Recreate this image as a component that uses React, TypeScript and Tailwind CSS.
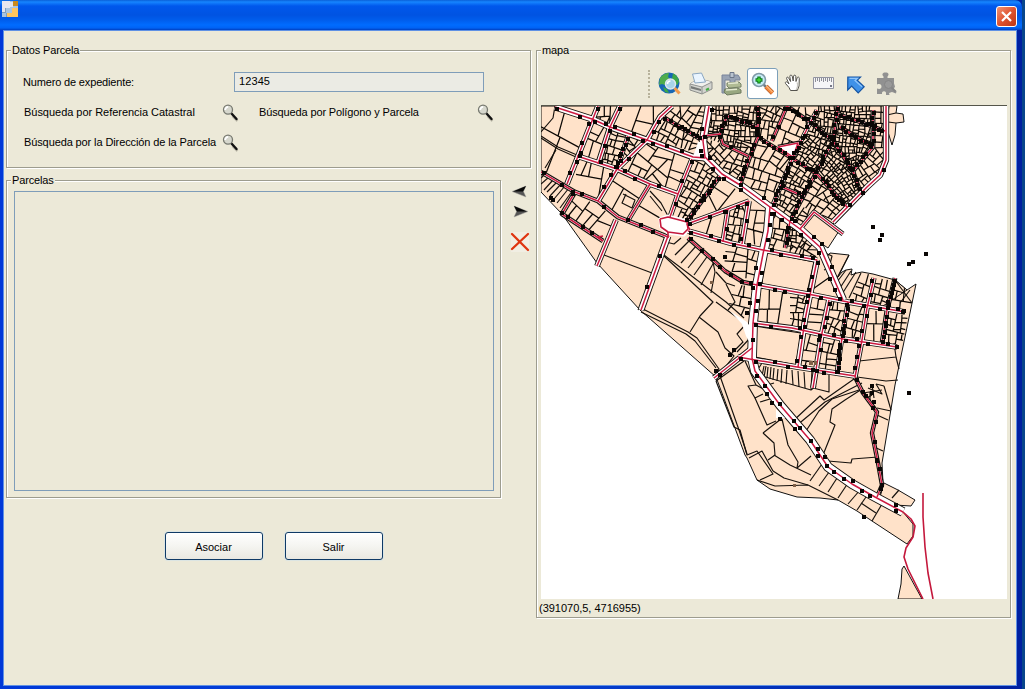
import React from "react";

type Pt = [number, number];

function parse(s: string): Pt[] {
  return s.split(" ").map((p) => p.split(",").map(Number) as Pt);
}

/* ---------- cadastral geometry ---------- */

const LAND = [
  "541,106 886,106 886,160 880,175 866,190 845,213 833,224 818,213 800,229 815,238 823,252 846,298 838,302 850,303 874,279 895,280 907,290 916,284 895,385 882,463 883,483 876,499 903,512 913,524 913,536 907,544 872,521 857,511 838,500 820,498 797,497 770,489 757,480 747,458 745,455 716,377 640,310 597,263 562,214 541,192",
  "889,106 897,106 896,113 903,114 904,122 896,123 895,135 892,145 888,132 886,130",
  "815,212 839,231 828,248 800,229",
  "830,253 849,255 838,277 842,272 846,270 852,269 851,275 857,273 862,272 873,274 895,280 907,290 880,308 845,302 823,262",
  "884,483 898,490 915,500 911,506 895,505 880,497",
  "904,566 922,599 898,599 901,584 902,569",
];

/* road, casing width, dot density (0 none, 1 sparse, 2 heavy) */
const ROADS: [string, number, number][] = [
  ["555,107 592,119 610,127 647,140 693,157 705,158", 5, 1],
  ["598,106 592,121 567,184", 4, 1],
  ["620,106 610,127 598,164", 4, 1],
  ["672,106 660,117 647,140 617,169 598,201", 4, 1],
  ["663,117 702,140", 2.5, 2],
  ["628,136 617,169", 3, 2],
  ["577,156 617,169 650,184 678,194", 4, 1],
  ["541,172 575,192 598,201 618,217 668,237", 2.5, 1],
  ["575,192 562,214 603,241", 2.5, 1],
  ["650,184 627,222", 3, 0],
  ["692,159 678,194 670,217", 3.5, 1],
  ["720,176 687,221", 2.5, 2],
  ["687,224 720,212 749,201", 3.5, 1],
  ["688,231 730,243 763,250 817,260", 4, 1],
  ["616,220 597,266", 4, 0],
  ["668,236 641,310", 5, 0],
  ["758,106 758,137 750,157 740,185", 2, 2],
  ["787,106 772,141", 2, 1],
  ["817,110 807,129 793,157 772,207", 3, 2],
  ["838,106 833,141 817,171 790,221 785,248", 2.2, 2],
  ["758,137 793,159 817,174 847,207", 2, 2],
  ["787,106 810,122 833,141 853,171 860,191", 2, 2],
  ["838,114 885,131", 2, 2],
  ["840,127 873,147", 2, 2],
  ["873,110 873,147 853,171", 2.5, 2],
  ["702,136 720,134 723,144 748,156", 2, 1],
  ["720,134 727,116 757,127", 2, 2],
  ["778,147 798,143 793,157 778,147", 2, 0],
  ["780,186 803,196", 2, 1],
  ["749,201 742,244", 4, 1],
  ["728,209 723,242", 3.5, 1],
  ["688,238 713,260 725,271 743,282 757,285", 2, 1],
  ["757,285 813,295 848,302 905,312", 4, 1],
  ["753,323 792,328 843,339 897,347", 4, 1],
  ["738,357 797,367 855,376", 4, 1],
  ["752,348 714,378", 4, 0],
  ["817,260 810,295 805,320 798,367", 4.5, 1],
  ["829,300 822,333 813,388", 4, 1],
  ["848,302 842,338 837,372", 3, 2],
  ["874,278 867,308 862,340 855,377", 3.5, 1],
  ["895,278 887,310 882,343", 2.5, 2],
  ["855,377 863,393 877,412 872,433 878,463 882,485 877,497", 2, 1],
  ["886,106 886,160 880,175 867,187 833,222", 4.5, 0],
  ["843,234 814,212 800,229", 3, 0],
];

/* trunk avenues, casing width, dot density */
const AVENUES: [string, number, number][] = [
  ["709,106 703,141 705,157 722,174 740,185 770,207 800,229 820,247 830,270 843,300", 6.5, 1],
  ["770,207 768,231 763,254 757,285 753,323 752,358 755,371 780,405 810,440 828,467 852,484 875,497 903,512", 8, 0],
];

/* polygons subdivided into lots: outline, target lot area */
const BLOCKS: [string, number][] = [
  ["595,106 620,106 610,127 592,119", 90],
  ["620,106 670,106 660,117 647,140 610,127", 420],
  ["674,106 707,106 702,140 663,117", 75],
  ["660,118 700,140 703,155 648,138", 65],
  ["541,106 592,120 567,184 541,170", 1500],
  ["592,121 610,127 598,164 577,156", 170],
  ["610,127 628,134 617,169 598,164", 50],
  ["629,134 645,141 617,169", 90],
  ["647,140 692,157 678,194 650,184 620,170", 200],
  ["577,156 617,169 598,201 575,192", 320],
  ["575,193 616,217 603,240 564,214", 230],
  ["617,171 650,184 627,222 598,201", 620],
  ["650,184 678,194 669,217 655,225 627,222", 1200],
  ["692,159 706,160 720,176 687,221 672,215 678,194", 55],
  ["721,177 749,200 690,221", 400],
  ["709,106 758,106 758,137 748,156 722,144 703,136", 32],
  ["703,138 722,144 750,157 740,184 705,157", 50],
  ["759,106 787,106 772,141 758,137", 50],
  ["788,106 817,108 807,129 793,157 772,141", 130],
  ["758,138 793,159 772,206 741,185", 110],
  ["818,106 838,106 833,141 817,171 793,157", 24],
  ["839,106 873,106 873,147 853,171 833,141", 22],
  ["874,106 886,106 886,160 880,175 860,191 853,171 873,147", 50],
  ["817,174 833,141 853,171 860,191 847,207", 20],
  ["793,159 817,172 790,220 772,206", 38],
  ["817,174 846,208 834,222 815,211 800,228 790,221", 60],
  ["748,201 768,209 766,245 742,244", 260],
  ["728,209 748,201 742,244 723,242", 50],
  ["700,217 727,210 722,240 688,230", 300],
  ["771,209 790,221 785,248 765,248", 80],
  ["790,222 818,240 816,258 786,251", 30],
  ["726,244 762,252 756,283 724,268", 120],
  ["735,284 753,287 748,320 728,308", 85],
  ["757,287 790,292 790,326 754,322", 300],
  ["790,292 813,297 805,328 790,326", 60],
  ["818,261 842,300 812,294", 230],
  ["812,297 828,301 822,333 806,330", 150],
  ["830,301 847,304 841,337 824,333", 70],
  ["849,304 866,308 861,340 843,337", 85],
  ["876,278 895,281 887,309 868,306", 60],
  ["862,272 874,276 866,306 849,302", 75],
  ["896,282 907,290 914,298 908,312 889,309", 100],
  ["868,310 886,312 881,342 863,340", 150],
  ["888,312 908,316 902,346 883,343", 40],
  ["802,332 821,336 814,370 799,367", 120],
  ["824,336 841,340 836,373 817,369", 85],
];

/* individually surveyed parcel boundaries */
const LINES = [
  "555,106 553,118 541,132", "541,136 558,147 577,155", "541,138 558,149 576,157", "556,150 545,168",
  "541,178 545,174", "541,184 549,177", "544,190 553,180", "547,192 557,182", "550,196 561,184", "554,199 565,186", "557,203 569,188", "560,208 573,190",
  "604,255 652,273", "652,273 641,305 638,310",
  "664,256 713,302 700,316 690,332", "660,252 726,302 744,318", "643,309 688,332 697,338 719,369 716,376",
  "641,312 686,334 695,341 716,368", "699,317 718,332 725,348 734,356 726,366",
  "716,302 746,324 737,334 743,342 730,355", "746,324 751,337 737,352",
  "675,255 690,240", "681,263 697,245", "688,268 704,248", "694,275 709,254", "701,285 714,262", "711,293 715,272 713,262",
  "666,242 674,244 681,238", "716,272 726,283 735,286", "726,284 735,302 728,310",
  "765,252 814,262 807,293 762,284 765,252", "755,326 801,333 796,365 755,357 755,326",
  "650,191 661,203 668,216", "623,194 635,200 632,208 622,203 626,194", "650,196 662,211",
  "716,381 734,427 740,430 747,455 757,451 773,474 760,480",
  "720,376 739,430 747,454", "744,361 716,381", "745,361 756,385 767,391 779,408 788,414",
  "756,385 748,386 755,398 763,394", "760,402 770,399", "755,398 767,425 776,421", "774,383 761,387",
  "763,433 774,443 775,455 768,460", "763,433 781,419", "749,458 762,451 773,471",
  "774,455 790,465 811,475", "797,468 811,456", "757,480 775,486 808,485 838,500",
  "773,471 784,478 808,485", "782,419 788,445 798,462 797,468",
  "762,363 755,374 811,390 816,386", "812,371 811,390",
  "793,421 820,396 824,400 854,379", "796,426 825,402 862,383",
  "806,431 819,411 832,399 862,389", "862,389 845,400 832,409 830,422 835,425 823,455",
  "828,461 851,463 852,459 878,457", "813,388 829,392 829,375",
  "857,377 886,381 898,380", "859,361 896,357 894,343", "896,357 899,369", "877,415 888,420", "874,447 883,451",
  "872,385 874,398", "884,386 891,410", "863,393 882,390", "865,399 872,395", "877,408 891,411", "876,384 884,386", "868,388 882,394 876,384", "870,392 870,400",
  "810,481 822,464", "819,486 832,468", "828,492 839,475", "838,498 848,483", "848,504 860,490", "857,510 866,497", "872,521 882,504",
  "861,503 876,513", "892,498 899,490", "823,252 832,256 829,268 824,270",
  "849,255 836,280", "851,271 838,291", "856,272 842,294", "861,273 849,298", "834,286 846,270",
  "895,280 912,303", "910,290 900,303",
  "764,366 762,376", "766,366 764,377", "768,367 767,378", "771,367 770,379", "774,368 773,380", "778,369 777,381", "782,369 781,383", "787,370 786,384", "792,370 793,385", "798,371 799,387", "804,372 805,388",
  "887,115 896,113", "888,122 896,123",
];

const RED_ONLY = [
  "903,512 911,519 915,526 913,537 906,548 904,557 908,569 923,599",
  "923,493 923,517 925,547 928,573 933,599",
  "660,219 668,217 687,222 688,229 683,234 668,232 661,227 660,219",
  "668,232 668,238", "603,241 598,237 603,236", "687,224 690,230",
];

const LONE_DOTS = [
  "873,227 882,235 880,240 926,254 913,262 909,264 909,393 884,170 864,517 553,200 551,198",
  "780,419 896,505 734,350 730,355 716,371 720,375 897,347 903,312 904,311 863,193 850,205",
  "660,256 647,287 725,257 813,370 877,460 872,386 872,393 874,402",
  "768,240 770,225 772,214 756,268 762,273 758,301 750,303 747,313 756,311 753,288 753,340",
  "757,376 765,386 767,394 772,403 780,404 794,421 795,429 800,428 811,441 818,449 818,456",
  "825,457 827,466 834,472 844,479 853,481 862,491 870,496 896,511 882,485",
].join(" ");

function rng(seed: number) {
  let s = seed;
  return () => {
    s = (s * 16807) % 2147483647;
    return s / 2147483647;
  };
}

function area(p: Pt[]) {
  return Math.abs(p.reduce((a, [x, y], i) => {
    const [u, v] = p[(i + 1) % p.length];
    return a + x * v - u * y;
  }, 0)) / 2;
}

/* splits a lot across its longest side until it is below the target area */
function split(p: Pt[], target: number, r: () => number, out: string[], depth = 0) {
  if (area(p) < target * (0.7 + r() * 1.1) || depth > 9) return;
  let k = 0;
  let best = 0;
  p.forEach(([x, y], i) => {
    const [u, v] = p[(i + 1) % p.length];
    const d = Math.hypot(u - x, v - y);
    if (d > best) { best = d; k = i; }
  });
  const [x0, y0] = p[k];
  const [x1, y1] = p[(k + 1) % p.length];
  const t = 0.32 + r() * 0.36;
  const m: Pt = [x0 + (x1 - x0) * t, y0 + (y1 - y0) * t];
  const tilt = (r() - 0.5) * 0.3;
  const nx = (x1 - x0) / best + tilt * ((y1 - y0) / best);
  const ny = (y1 - y0) / best - tilt * ((x1 - x0) / best);
  const side = (q: Pt) => (q[0] - m[0]) * nx + (q[1] - m[1]) * ny;
  const a: Pt[] = [];
  const b: Pt[] = [];
  const cut: Pt[] = [];
  p.forEach((q, i) => {
    const n = p[(i + 1) % p.length];
    const s = side(q);
    const e = side(n);
    (s >= 0 ? a : b).push(q);
    if (s >= 0 !== e >= 0) {
      const f = s / (s - e);
      const c: Pt = [q[0] + (n[0] - q[0]) * f, q[1] + (n[1] - q[1]) * f];
      a.push(c);
      b.push(c);
      cut.push(c);
    }
  });
  if (cut.length < 2) return;
  out.push(`M${cut[0][0].toFixed(1)},${cut[0][1].toFixed(1)}L${cut[1][0].toFixed(1)},${cut[1][1].toFixed(1)}`);
  split(a, target, r, out, depth + 1);
  split(b, target, r, out, depth + 1);
}

const lots: string[] = [];
BLOCKS.forEach(([s, t], i) => split(parse(s), t, rng(911 + i * 77), lots));

function roadDots(s: string, seed: number, offset: number, density: number): Pt[] {
  const r = rng(seed);
  const pts = parse(s);
  const out: Pt[] = [];
  if (density === 0) return out;
  for (let i = 0; i < pts.length - 1; i++) {
    const [x, y] = pts[i];
    const [u, v] = pts[i + 1];
    const len = Math.hypot(u - x, v - y);
    let d = 3 + r() * 7;
    while (d < len) {
      const o = (r() < 0.5 ? -1 : 1) * offset;
      out.push([x + ((u - x) * d) / len - ((v - y) / len) * o, y + ((v - y) * d) / len + ((u - x) / len) * o]);
      d += density > 1 ? 2.5 + r() * 4 : 9 + r() * 15;
    }
  }
  return out;
}

const dots: Pt[] = [
  ...ROADS.flatMap(([s, w, n], i) => roadDots(s, 37 + i * 131, w > 3 ? 1.5 : 0.9, n)),
  ...AVENUES.flatMap(([s, , n], i) => roadDots(s, 991 + i * 17, 3.4, n)),
  ...parse(LONE_DOTS),
].filter(([, y]) => y > 108);

function CadastralMap() {
  const all = [...ROADS, ...AVENUES];
  return (
    <svg className="block h-[493px] w-[466px] bg-white" viewBox="541 106 466 493" fill="none" strokeLinejoin="round">
      {LAND.map((p) => <polygon key={p} points={p} fill="#ffe2c9" stroke="#111" strokeWidth="1" />)}
      <path d={lots.join("")} stroke="#0c0805" strokeWidth="1.25" />
      {LINES.map((p) => <polyline key={p} points={p} stroke="#15100c" strokeWidth="1.15" />)}
      {all.map(([p, w]) => <polyline key={p} points={p} stroke="#15100c" strokeWidth={w < 3 ? w + 2.4 : w + 1.8} />)}
      {all.map(([p, w]) => <polyline key={p} points={p} stroke="#fff" strokeWidth={w} />)}
      <polygon points="660,219 668,216 687,221 689,229 684,235 668,233 661,227" fill="#fff" stroke="#fff" strokeWidth="3" />
      <polygon points="778,147 798,143 793,157" fill="#fff" />
      <polygon points="740,357 752,346 753,362" fill="#fff" />
      <polygon points="730,311 747,322 751,328 751,345 746,336 742,324" fill="#fff" />
      <polygon points="776,409 776,418 785,418" fill="#fff" />
      <polygon points="698,142 706,142 708,160 693,157" fill="#fff" />
      {all.map(([p]) => <polyline key={p} points={p} stroke="#cc1a40" strokeWidth="1.5" />)}
      {RED_ONLY.map((p) => <polyline key={p} points={p} stroke="#c4183c" strokeWidth="1.6" />)}
      <path
        d={dots.map(([x, y]) => `M${Math.round(x) - 2},${Math.round(y) - 2}h4v4h-4z`).join("")}
        fill="#0a0705"
        shapeRendering="crispEdges"
      />
      <path d="M809,361h4v4h-4zM814,361h3v4h-3zM793,484h3v3h-3zM710,281h3v3h-3z" fill="#806048" />
    </svg>
  );
}

/* ---------- icons ---------- */

function Magnifier() {
  return (
    <svg width="18" height="18" viewBox="0 0 18 18" fill="none" className="shrink-0">
      <path d="M10.500 12l5 5" stroke="#c4c1b1" strokeWidth="2.500" />
      <path d="M9.500 9.500l5 5.500" stroke="#111" strokeWidth="2.400" strokeLinecap="round" />
      <circle cx="6" cy="5.700" r="4.500" fill="#d6d7cd" stroke="#777970" strokeWidth="1.300" />
      <path d="M3.200 5.900a3 3 0 0 1 3-3" stroke="#fff" strokeWidth="1.800" />
    </svg>
  );
}

function AppIcon() {
  return (
    <svg width="16" height="16" viewBox="0 0 16 16" shapeRendering="crispEdges">
      <path fill="#a9c4df" d="M0 0h16v16H0z" />
      <path fill="#e6e6ef" d="M0 0h8v7H3v4H0z" />
      <path fill="#c98a1c" d="M11 0h5v5h-5z" />
      <path fill="#e1e5ea" d="M8 1h3v5H8z" />
      <path fill="#ffc55c" d="M10 7h6v9H5v-4h5z" />
      <path fill="#7d9dc0" d="M0 11h3v1H0zM3 7h1v5H3zM4 12h1v4H4z" />
    </svg>
  );
}

function GlobeIcon() {
  return (
    <svg width="24" height="24" viewBox="0 0 24 24" fill="none">
      <circle cx="11" cy="11" r="10.500" fill="#1766b4" />
      <path d="M2 6c2-3 5-5 9-5l-1 4 2 2-4 2-1 4-3-1-3 1z" fill="#4fac4c" />
      <path d="M15 1.500c3 1 5.500 4 6 8l-2 4-2-3-3-4zM5 15l4 2 2 4-4-1z" fill="#3da748" />
      <path d="M16.500 16l5 5.500" stroke="#f39a4b" strokeWidth="3" />
      <circle cx="12.500" cy="12" r="5" fill="#a9d4ea" stroke="#dfe8ec" strokeWidth="1.500" />
      <path d="M9.500 12a3 3 0 0 1 3-3" stroke="#fff" strokeWidth="1.500" />
    </svg>
  );
}

function PrinterIcon() {
  return (
    <svg width="24" height="24" viewBox="0 0 24 24" fill="none" strokeWidth="1">
      <path d="M1 12l6-4 3 2 5-2 8 2v7l-10 5-12-4z" fill="#d3d4cf" stroke="#8d8f8c" />
      <path d="M1 12l6-4 3 1 5-1 8 2-10 5z" fill="#f0f0ed" />
      <path d="M1 12l12 3 10-5M13 15v7" stroke="#909290" />
      <path d="M2 14l10 3v2L2 16.500z" fill="#777a78" />
      <path d="M6 11L3.500 2l9-1 4 9z" fill="#eaf5ff" stroke="#8ba7c2" />
      <path d="M17 18l3-1.500" stroke="#43ac42" strokeWidth="2" />
    </svg>
  );
}

function PressIcon() {
  return (
    <svg width="24" height="24" viewBox="0 0 24 24" fill="none">
      <path d="M2 3h16l2 3v2h-5v3h-5V8H5v13H2z" fill="#98a3b4" stroke="#78839a" />
      <path d="M10 .500h4v5h-4z" fill="#b9c3cf" stroke="#6b7689" />
      <path d="M7 11l12-1 2 2v3l-12 1-2-2z" fill="#b0bb94" stroke="#768266" />
      <path d="M5 17l13-1 3 2v3l-14 2-3-3z" fill="#98a780" stroke="#6f7b61" />
      <path d="M8 11.500l10-.7M6 18l11-.8" stroke="#e5ead1" strokeWidth="1.400" />
    </svg>
  );
}

function ZoomInIcon() {
  return (
    <svg width="24" height="24" viewBox="0 0 24 24" fill="none">
      <path d="M12.500 12.500l3 3" stroke="#6d7b84" strokeWidth="2.500" />
      <path d="M15 14.500l6.500 6.500" stroke="#b75d27" strokeWidth="4.600" />
      <path d="M15 14.500l6.500 6.500" stroke="#f58a3f" strokeWidth="3.200" />
      <path d="M15.500 14l6 6" stroke="#ffd1a1" strokeWidth="1" />
      <circle cx="8" cy="8" r="6.500" fill="#c8ecf7" stroke="#809aa7" strokeWidth="1.600" />
      <path d="M8 4.500v7M4.500 8h7" stroke="#08721b" strokeWidth="3.400" />
      <path d="M8 5.500v5M5.500 8h5" stroke="#43dd37" strokeWidth="1.400" />
    </svg>
  );
}

function HandIcon() {
  return (
    <svg width="18" height="18" viewBox="0 0 18 18" fill="none">
      <path d="M6.500 16.500L5 13.500 1.500 9.500C.8 8 2.300 7.200 3.400 8.300L5 10 2.600 4.500C2.200 3 4 2.600 4.600 3.900L6.600 7.500 5.800 2.300c0-1.500 2-1.600 2.400-.2L9.200 7l.3-4.900c.3-1.400 2.200-1.200 2.300.2L12 7.500l1.200-3.800c.7-1.200 2.300-.6 2.100.8L15 12l-1.700 4.500z" fill="#fff" stroke="#55534d" strokeWidth="1" />
      <path d="M12.500 8.500c1 3 .3 5-1 7.500h1.500l1.500-4.500.2-3z" fill="#c9c7c0" />
    </svg>
  );
}

function RulerIcon() {
  return (
    <svg width="21" height="12" viewBox="0 0 21 12" fill="none">
      <path d="M.5.5h20v11H.5z" fill="#f5f5f7" stroke="#9395a2" />
      <path d="M2.500 1v4M4.500 1v3M6.500 1v4M8.500 1v3M10.500 1v4M12.500 1v3M14.500 1v4M16.500 1v3M18.500 1v4" stroke="#74757f" strokeWidth=".8" />
      <path d="M17 8h2v2h-2z" fill="#777887" />
    </svg>
  );
}

function ArrowIcon() {
  return (
    <svg width="18" height="18" viewBox="0 0 18 18">
      <path d="M.8 1h12.700l-3.300 3.300 7 6.500-6 6.200-6.500-7-4 4z" fill="#3f91e8" stroke="#1553a1" strokeWidth="1.200" />
      <path d="M2.500 2.300h8L8 4.500l7 6.300" fill="none" stroke="#8fc5fb" strokeWidth="1.200" />
    </svg>
  );
}

function PuzzleIcon() {
  return (
    <svg width="22" height="23" viewBox="0 0 22 23">
      <path d="M1 6h6.500V4.500C5.500 2.500 6.500.5 9.500.5s4 2 2 4V6H18v5.500l1 3-1.500 3 3 1.500-.5 2.500-4-1.500-3 1 .5 2H10v-2.500c-1-1.800-3-1.800-4 0V22H1v-5.500c3 1 4.500 0 4.500-2s-1.500-3-4.500-2z" fill="#919191" />
      <circle cx="12.500" cy="12.500" r="4" fill="#999" stroke="#868686" />
      <path d="M15.500 15.500l4 4" stroke="#858585" strokeWidth="2" />
    </svg>
  );
}

/* ---------- dialog ---------- */

function Group({ title, className, children }: { title: string; className: string; children: React.ReactNode }) {
  return (
    <section className={`flex flex-col border border-[#9d9c8e] shadow-[1px_1px_0_#fff,inset_1px_1px_0_#fff] ${className}`}>
      <h2 className="-mt-[8px] mb-px ml-[4px] h-[14px] self-start bg-[#ece9d8] px-px leading-[14px] tracking-[-0.14px]">{title}</h2>
      {children}
    </section>
  );
}

function ToolSlot({ children }: { children: React.ReactNode }) {
  return <div className="flex h-[30px] w-[31px] shrink-0 items-center justify-center">{children}</div>;
}

const buttonClass =
  "h-[28px] w-[98px] rounded-[3px] border border-[#0f3a66] bg-gradient-to-b from-white via-[#f5f5f1] to-[#e9e8e1] pr-px pt-px text-center shadow-[0_0_0_1px_#dce5e3]";

export default function App() {
  return (
    <div className="flex h-[689px] w-[1025px] overflow-hidden bg-[#08468c] font-['Liberation_Sans',Arial,sans-serif] text-[11px] leading-[14px] text-black">
      <div className="flex h-[689px] w-[1022px] flex-col bg-gradient-to-r from-[#0038d8] via-[#0742d5] to-[#0020a0]">
        <header className="flex h-[30px] shrink-0 items-start justify-between rounded-tr-[7px] bg-[linear-gradient(180deg,#0b60d8_0px,#1685ff_2px,#0058ec_6px,#0053e2_15px,#005dec_20px,#006cff_25px,#0062f4_28px,#003fc0_30px)] pl-[2px] pr-[5px]">
          <div className="pt-px"><AppIcon /></div>
          <button aria-label="Cerrar" className="mt-[6px] flex size-[21px] items-center justify-center rounded-[3px] border border-white bg-gradient-to-br from-[#f09271] via-[#df5330] to-[#bd3614]">
            <svg width="13" height="13" viewBox="0 0 13 13"><path d="M2 2l9 9M11 2l-9 9" stroke="#fff" strokeWidth="2.200" /></svg>
          </button>
        </header>
        <main className="mb-[3px] ml-[3px] mr-[5px] flex flex-1 items-start border border-[#5f91e5] bg-[#ece9d8] pl-[2px] pt-[19px]">
          <div className="flex w-[530px] shrink-0 flex-col">
            <Group title="Datos Parcela" className="h-[118px] w-[525px]">
              <div className="mt-[13px] flex h-[21px] items-center pl-[16px]">
                <label htmlFor="exp" className="w-[211px] pt-px tracking-[-0.16px]">Numero de expediente:</label>
                <input id="exp" defaultValue="12345" className="h-[20px] w-[250px] border border-[#7f9db9] bg-[#ebebe4] pb-[2px] pl-[4px] tracking-[0.1px] outline-none" />
              </div>
              <div className="mt-[11px] flex h-[20px] items-center pl-[17px]">
                <span className="w-[198px] pb-[2px] tracking-[-0.03px]">Búsqueda por Referencia Catastral</span>
                <Magnifier />
                <span className="ml-[19px] w-[218px] pb-[2px] tracking-[-0.13px]">Búsqueda por Polígono y Parcela</span>
                <Magnifier />
              </div>
              <div className="mt-[10px] flex h-[20px] items-center pl-[17px]">
                <span className="w-[198px] whitespace-nowrap pb-[2px] tracking-[-0.11px]">Búsqueda por la Dirección de la Parcela</span>
                <Magnifier />
              </div>
            </Group>
            <div className="mt-[12px] flex">
              <Group title="Parcelas" className="h-[318px] w-[495px]">
                <div className="ml-[7px] mt-[3px] h-[300px] w-[480px] border border-[#7f9db9]" />
              </Group>
              <div className="flex w-[35px] flex-col items-center pl-[3px] pt-[5px]">
                <svg className="mr-[2px]" width="16" height="13" viewBox="0 0 16 13"><path d="M1 6.500L15 1l-2.500 5.500L15 12z" fill="#555" stroke="#aaa9a0" strokeWidth=".5" /><path d="M2 6.500L15 1l-3 5.500z" fill="#080808" /></svg>
                <svg className="ml-px mt-[7px]" width="16" height="13" viewBox="0 0 16 13"><path d="M15 6.500L1 1l2.500 5.500L1 12z" fill="#555" stroke="#aaa9a0" strokeWidth=".5" /><path d="M14 6.500L1 1l3 5.500z" fill="#080808" /></svg>
                <svg className="mt-[14px]" width="20" height="20" viewBox="0 0 20 20" fill="none"><path fill="#f1eee3" d="M1 0h18v20H1z" /><path d="M2 2l16 16M18 2L2 17" stroke="#df3510" strokeWidth="2.300" strokeLinecap="round" /></svg>
              </div>
            </div>
            <div className="mt-[34px] flex gap-[22px] pl-[159px]">
              <button className={buttonClass}>Asociar</button>
              <button className={buttonClass}>Salir</button>
            </div>
          </div>
          <Group title="mapa" className="h-[568px] w-[475px]">
            <div className="mt-[10px] flex h-[31px] items-center pl-[111px]">
              <div className="mr-[4px] h-[28px] w-0 border-l-2 border-dotted border-[#b7b29b]" />
              <ToolSlot><GlobeIcon /></ToolSlot>
              <ToolSlot><PrinterIcon /></ToolSlot>
              <ToolSlot><PressIcon /></ToolSlot>
              <div className="flex h-[31px] w-[31px] shrink-0 items-center justify-center rounded-[3px] border border-[#7c9fb9] bg-white"><ZoomInIcon /></div>
              <div className="flex h-[30px] w-[29px] items-center justify-center pb-[2px]"><HandIcon /></div>
              <div className="flex h-[30px] w-[33px] items-center justify-center pb-[2px]"><RulerIcon /></div>
              <div className="flex h-[30px] w-[32px] items-center justify-center pt-[2px]"><ArrowIcon /></div>
              <div className="flex h-[30px] w-[29px] items-center justify-center"><PuzzleIcon /></div>
            </div>
            <div className="ml-[4px] mt-[6px] w-[466px] border-t border-[#55564b]"><CadastralMap /></div>
            <p className="ml-[2px] mt-[2px] tracking-[-0.02px]">(391070,5, 4716955)</p>
          </Group>
        </main>
      </div>
    </div>
  );
}
